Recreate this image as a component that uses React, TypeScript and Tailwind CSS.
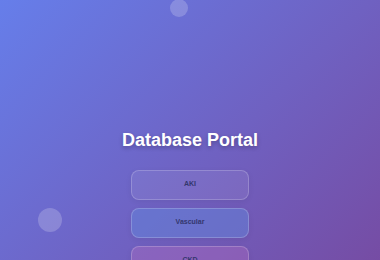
const sections = [
  { name: "AKI", tint: "bg-white/[0.08]" },
  { name: "Vascular", tint: "bg-[#5f8ee0]/40" },
  { name: "CKD", tint: "bg-[#c46fc0]/30" },
];

export default function App() {
  return (
    <div
      className="relative min-h-screen overflow-hidden bg-[linear-gradient(135deg,#667eea_0%,#764ba2_100%)] font-['Liberation_Sans',Arial,sans-serif]"
    >
      <div className="pointer-events-none absolute left-[170px] top-[-1px] h-[18px] w-[18px] rounded-full bg-white/20 blur-[0.5px]" />
      <div className="pointer-events-none absolute left-[38px] top-[208px] h-[24px] w-[24px] rounded-full bg-white/20 blur-[0.5px]" />

      <div className="relative flex flex-col items-center pt-[130px]">
        <h1 className="text-[18px] font-bold leading-[1.2] text-white [text-shadow:0_2px_4px_rgba(0,0,0,0.25)]">
          Database Portal
        </h1>
        <div className="mt-[18px] flex w-[118px] flex-col gap-[8px]">
          {sections.map((s) => (
            <button
              key={s.name}
              type="button"
              className={`h-[30px] w-full rounded-[8px] border border-white/20 ${s.tint} text-[7px] font-bold text-[#34376e] shadow-[0_2px_6px_rgba(0,0,0,0.06)]`}
            >
              {s.name}
            </button>
          ))}
        </div>
      </div>
    </div>
  );
}
